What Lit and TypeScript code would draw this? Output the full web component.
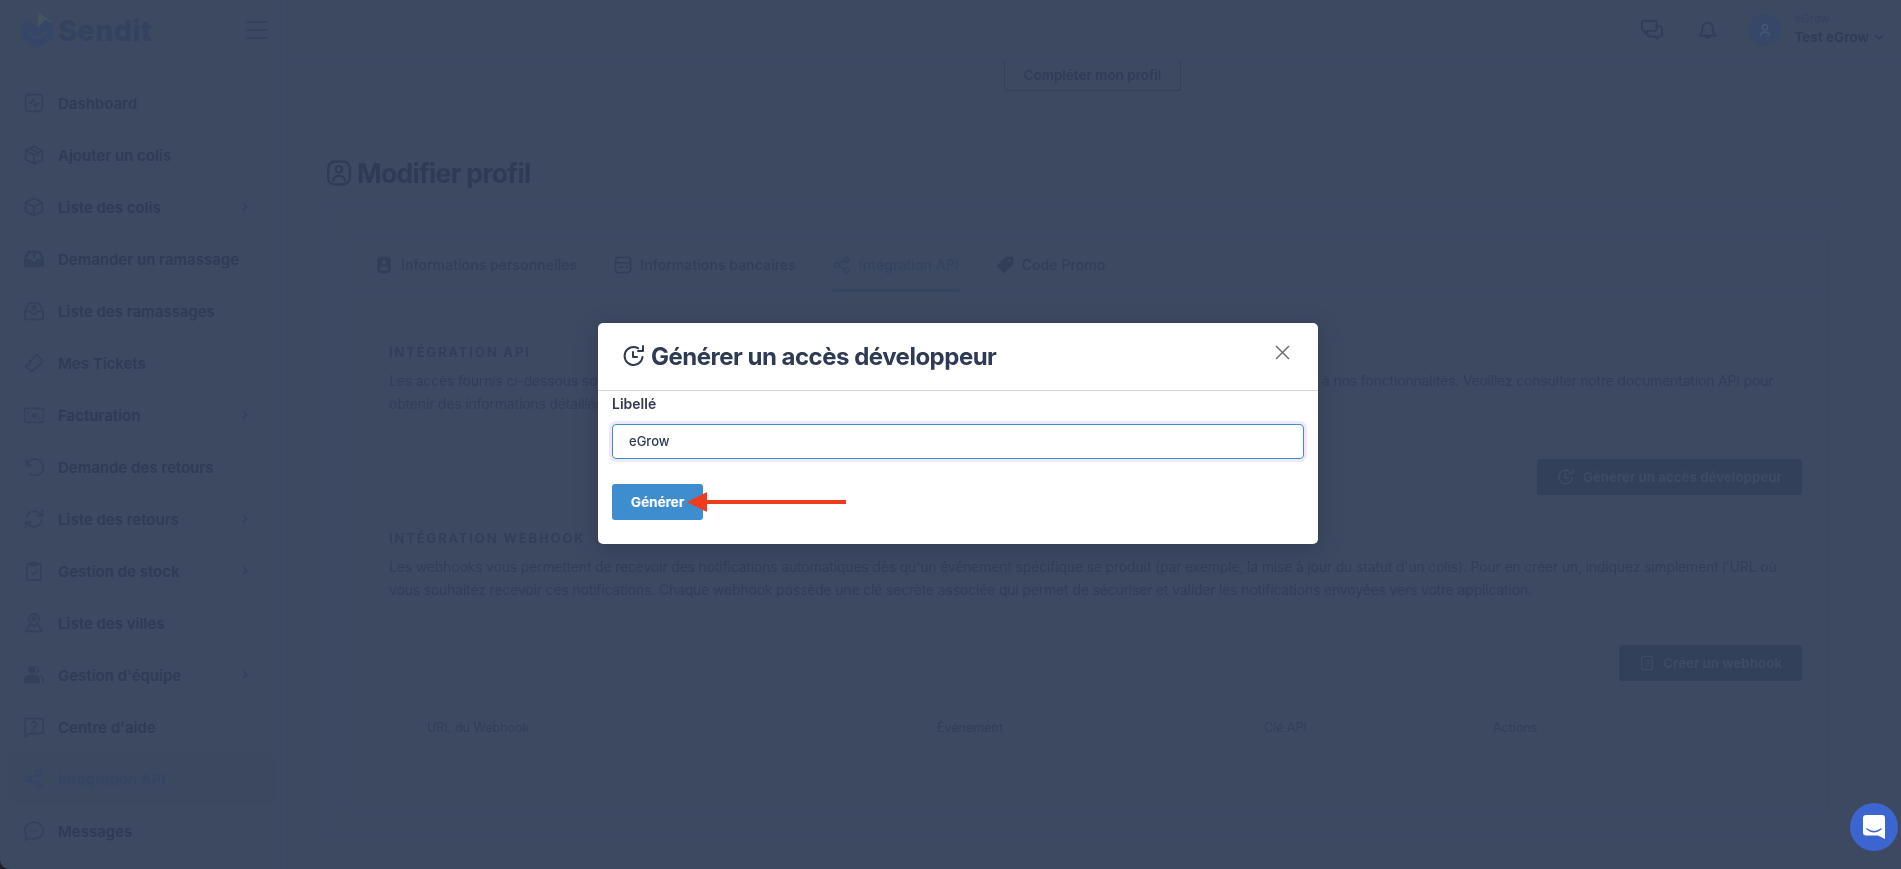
import { LitElement, html, css, svg } from "lit";
import { customElement } from "lit/decorators.js";

const s = (body: unknown, size = 20, filled = false) => html`<svg class="ic" width=${size} height=${size} viewBox="0 0 24 24" fill=${filled ? "currentColor" : "none"} stroke=${filled ? "none" : "currentColor"} stroke-width="2" stroke-linecap="round" stroke-linejoin="round">${body}</svg>`;

const icons: Record<string, unknown> = {
  activity: svg`<rect x="2" y="2" width="20" height="20" rx="4"/><path d="M5.5 12.5h3l2-5.5 3 10 2-4.5h3" stroke-width="1.5"/>`,
  boxFull: svg`<path d="M12 1.5l10 5.2v10.6l-10 5.2-10-5.2V6.7z"/><path d="M2.5 7l9.5 5 9.5-5M12 12v10M7 4.2l10 5.2v3.2"/>`,
  box: svg`<path d="M12 1.5l10 5.2v10.6l-10 5.2-10-5.2V6.7z"/><path d="M2.5 7l9.5 5 9.5-5M12 12v10"/>`,
  inboxFill: svg`<path fill="currentColor" stroke="none" d="M6 2h12a2 2 0 0 1 1.8 1.2L24 12v8a2 2 0 0 1-2 2H2a2 2 0 0 1-2-2v-8l4.2-8.8A2 2 0 0 1 6 2zm-3 10h5.5l1.5 3h4l1.5-3H21l-3.4-7H6.4zM12 5.5l3 3h-2v3h-2v-3H9z"/>`,
  inbox: svg`<path d="M6 2.5h12l5 10V20a2 2 0 0 1-2 2H3a2 2 0 0 1-2-2v-7.5z"/><path d="M1.5 12.5h6.5l2 3h4l2-3h6.5M12 11V5.5M9.5 8L12 5.5 14.5 8"/>`,
  ticket: svg`<path d="M15.5 2L22 8.500c-1.500 1-2 3 -.5 3.500L9 22.500 2 15.500l1.500-1.500c2 1 4-1 3-3z"/>`,
  money: svg`<rect x="0" y="4" width="24" height="17" rx="4"/><circle cx="12.500" cy="12.500" r="2" stroke-width="2"/><path d="M5 9h1M18 16h1"/>`,
  undo: svg`<path d="M3 4v6h6"/><path d="M3.500 10A10 10 0 1 1 7 20"/>`,
  sync: svg`<path d="M22 2v6h-6M2 22v-6h6"/><path d="M3 10a9.500 9.500 0 0 1 17-3l2 1M21 14a9.500 9.500 0 0 1-17 3l-2-1"/>`,
  clip: svg`<rect x="3.500" y="3.500" width="17" height="19.500" rx="2"/><path d="M8.500 3.500a2 2 0 0 1 2-2h3a2 2 0 0 1 2 2v2h-7zM9 14l2.500 2.500L15.500 12"/>`,
  pin: svg`<path d="M12 16S6 11.500 6 7a6 6 0 0 1 12 0c0 4.500-6 9-6 9z"/><circle cx="12" cy="7" r="2"/><path d="M7 14l-5 8h20l-5-8"/>`,
  users: svg`<g fill="currentColor" stroke="none"><circle cx="9.500" cy="5.500" r="4.500"/><path d="M0 22v-4c0-4 3-6.500 9.500-6.500S19 14 19 18v4z"/></g><path d="M15 2a4 4 0 0 1 0 7.500M20 13c2 1.500 3 3 3 5.500V22" stroke-width="1.500"/>`,
  help: svg`<path d="M3 2h18a2 2 0 0 1 2 2v14a2 2 0 0 1-2 2H7l-5.500 3.500V3.500A1.500 1.500 0 0 1 3 2z"/><path d="M9 8.500a3 3 0 1 1 4.500 2.600c-1 .6-1.500 1-1.500 2.400M12 16.500v.1" stroke-width="1.800"/>`,
  share: svg`<circle cx="5" cy="12" r="3"/><circle cx="18" cy="5" r="3"/><circle cx="18" cy="19" r="3"/><path d="M7.600 10.500l7.800-4M7.600 13.500l7.800 4"/>`,
  message: svg`<path d="M12 1.500c6.300 0 11 4.500 11 10s-4.700 10-11 10c-1.600 0-3.200-.3-4.500-.9L1.500 23l1.700-5.600A10 10 0 0 1 1 11.500c0-5.500 4.700-10 11-10z"/><path d="M8 11.500h.1M12 11.500h.1M16 11.500h.1"/>`,
  chevron: svg`<path d="M9 5.500l6.500 6.500L9 18.500" stroke-width="3.500"/>`,
  down: svg`<path d="M5 9l7 7 7-7" stroke-width="3.500"/>`,
  chat: svg`<path d="M3 2h12a2 2 0 0 1 2 2v7a2 2 0 0 1-2 2H7l-3 2.500V13H3a2 2 0 0 1-2-2V4a2 2 0 0 1 2-2z"/><path d="M17 8h4a2 2 0 0 1 2 2v7a2 2 0 0 1-2 2h-2l-1.500 2.500L15 19H9a2 2 0 0 1-2-2v-4"/>`,
  bell: svg`<path d="M6 10a6 6 0 0 1 12 0c0 6 1 7 3 9H3c2-2 3-3 3-9z"/><path d="M9.500 19a2.500 2.500 0 0 0 5 0"/>`,
  user: svg`<circle cx="12" cy="8" r="4"/><path d="M5 21c0-4 3-6 7-6s7 2 7 6"/>`,
  profile: svg`<rect x="2" y="1.500" width="20" height="21" rx="6"/><circle cx="12" cy="8.500" r="3"/><path d="M6.500 19c.5-3 2.500-4.500 5.500-4.500s5 1.500 5.500 4.500"/>`,
  badge: svg`<path fill="currentColor" stroke="none" d="M8 1h8a5 5 0 0 1 5 5v13a4 4 0 0 1-4 4H7a4 4 0 0 1-4-4V6a5 5 0 0 1 5-5zm4 4.500a3 3 0 1 0 0 6 3 3 0 0 0 0-6zM6.500 19h11c-.3-3-2.500-5-5.500-5s-5.200 2-5.500 5z"/>`,
  table: svg`<rect x="2" y="2" width="20" height="20" rx="4"/><path d="M2 9h20M7 15h5M16 15h2"/>`,
  tag: svg`<path fill="currentColor" stroke="none" d="M13 1h9a1 1 0 0 1 1 1v9L11 23 1 13zM18 4a2 2 0 1 0 0 4 2 2 0 0 0 0-4z"/>`,
  clockRefresh: svg`<path d="M20.500 13A9 9 0 1 1 16 4.200"/><path d="M21 2v5h-5M11 8v5h4"/>`,
  doc: svg`<rect x="4" y="2" width="16" height="20" rx="3"/><path d="M8 8h.5M11 8h5M8 12h.5M11 12h5M8 16h.5M11 16h5" stroke-width="1.500"/>`,
};

const nav: [string, string, boolean, boolean?][] = [
  ["Dashboard", "activity", false],
  ["Ajouter un colis", "boxFull", false],
  ["Liste des colis", "box", true],
  ["Demander un ramassage", "inboxFill", false],
  ["Liste des ramassages", "inbox", false],
  ["Mes Tickets", "ticket", false],
  ["Facturation", "money", true],
  ["Demande des retours", "undo", false],
  ["Liste des retours", "sync", true],
  ["Gestion de stock", "clip", true],
  ["Liste des villes", "pin", false],
  ["Gestion d'équipe", "users", true],
  ["Centre d'aide", "help", false],
  ["Intégration API", "share", false, true],
  ["Messages", "message", false],
];

const tabs: [string, string, boolean?][] = [
  ["Informations personnelles", "badge"],
  ["Informations bancaires", "table"],
  ["Intégration API", "share", true],
  ["Code Promo", "tag"],
];

@customElement("app-root")
export class AppRoot extends LitElement {
  static styles = css`
    :host {
      display: block;
      position: relative;
      height: 100vh;
      overflow: hidden;
      background: #1d2029;
      font-family: "Inter", "Liberation Sans", sans-serif;
    }
    .ic { display: block; flex: none; }
    .screen {
      display: flex;
      height: 100%;
      background: #3d4961;
      color: #333f59;
      border-bottom-left-radius: 9px;
      overflow: hidden;
      filter: blur(0.3px);
    }
    .side {
      width: 288px;
      flex: none;
      border-right: 1px solid #3b4760;
      box-sizing: border-box;
    }
    .brand {
      height: 60px;
      display: flex;
      align-items: center;
      padding: 0 19px 0 22px;
      color: #34425f;
    }
    .brand-name {
      font-size: 29px;
      font-weight: 800;
      line-height: 1;
      margin-left: 5px;
      letter-spacing: 0.2px;
      flex: 1;
    }
    .burger { width: 22px; display: grid; gap: 6px; }
    .burger i { display: block; height: 2px; background: #34425f; }
    .nav { padding-top: 17px; }
    .item {
      height: 52px;
      display: flex;
      align-items: center;
      font-size: 15px;
      font-weight: 600;
      color: #2f3b55;
      margin: 0 10px;
      padding: 0 26px 0 14px;
      box-sizing: border-box;
      border-radius: 6px;
    }
    .item > .ic { margin-right: 14px; color: #33405a; }
    .label { flex: 1; white-space: nowrap; }
    .chev { color: #33405a; }
    .item.active { background: #3c4860; color: #344565; }
    .item.active > .ic { color: #344565; }
    .main { flex: 1; min-width: 0; padding: 0 59px 0 34px; }
    .top {
      height: 60px;
      display: flex;
      align-items: center;
      justify-content: flex-end;
      margin: 0 -59px 0 -34px;
      padding-right: 16px;
      border-bottom: 1px solid #3b4760;
      box-sizing: border-box;
    }
    .top-ic { color: #313d57; margin-right: 34px; }
    .avatar {
      width: 32px;
      height: 32px;
      border-radius: 50%;
      background: #364767;
      color: #475674;
      display: grid;
      place-items: center;
      margin-right: 13px;
      margin-left: -3px;
    }
    .who { display: grid; gap: 2px; margin-top: -2px; }
    .who small { font-size: 11.5px; color: #34425f; line-height: 14px; }
    .who b { font-size: 13.5px; color: #303c56; font-weight: 700; display: flex; align-items: center; gap: 4px; line-height: 18px; }
    .notice {
      height: 48px;
      margin: 0 -38px 0 -11px;
      border: 1px solid #3c4860;
      border-top: 0;
      display: flex;
      justify-content: center;
      box-sizing: border-box;
    }
    .notice button {
      all: unset;
      height: 31px;
      width: 177px;
      margin-left: -6px;
      box-sizing: border-box;
      border: 1px solid #343f58;
      border-top: 0;
      border-radius: 0 0 4px 4px;
      text-align: center;
      font-size: 13.5px;
      line-height: 30px;
      font-weight: 600;
      color: #313c56;
    }
    .title {
      height: 92px;
      margin: 0 0 0 4px;
      display: flex;
      align-items: center;
      gap: 5px;
      padding-top: 38px;
      box-sizing: border-box;
      font-size: 26.5px;
      font-weight: 700;
      color: #2f3b55;
      letter-spacing: -0.7px;
    }
    .panel {
      height: 638px;
      box-sizing: border-box;
      padding: 37px 12px 25px 28px;
      border: 1px solid #3b4760;
    }
    .card { height: 100%; box-sizing: border-box; border: 1px solid #3b4760; margin: -1px 0 0 -1px; }
    .tabs { height: 54px; box-sizing: border-box; display: flex; gap: 37px; padding-left: 24px; border-bottom: 1px solid #3b4760; }
    .tab {
      display: flex;
      align-items: center;
      gap: 8px;
      font-size: 14px;
      font-weight: 500;
      letter-spacing: 0.08px;
      color: #323e58;
      margin-bottom: -1px;
      border-bottom: 3px solid transparent;
      padding-top: 2px;
      box-sizing: border-box;
    }
    .tab.on { border-color: #34465f; color: #334360; }
    .body { padding: 51px 26px 0 38px; }
    h3 { margin: 0; font-size: 13px; font-weight: 600; line-height: 18px; letter-spacing: 1.9px; color: #323e58; }
    p { margin: 8px 0 0; font-size: 14px; line-height: 23px; color: #323e58; white-space: nowrap; letter-spacing: -0.18px; }
    .row { display: flex; justify-content: flex-end; margin: 44px 0 34px; }
    .row.last { margin-bottom: 37px; }
    .dark {
      height: 36px;
      box-sizing: border-box;
      padding: 0 20px;
      background: #33405a;
      color: #3f4b64;
      border-radius: 3px;
      display: flex;
      align-items: center;
      gap: 8px;
      font-size: 13.3px;
      font-weight: 700;
    }
    .cols {
      display: grid;
      grid-template-columns: 510px 327px 229px auto;
      padding-left: 38px;
      font-size: 12.5px;
      line-height: 20px;
      color: #323e58;
    }
    .backdrop { position: absolute; inset: 0; padding: 323px 0 0 598px; box-sizing: border-box; }
    .modal {
      width: 720px;
      height: 221px;
      background: #fff;
      border-radius: 5px;
      box-shadow: 0 6px 22px rgba(36, 46, 70, 0.45);
      color: #2f3a52;
    }
    .m-head {
      height: 68px;
      box-sizing: border-box;
      border-bottom: 1px solid #d5d5e4;
      display: flex;
      align-items: center;
      padding: 0 28px 0 24px;
      gap: 5px;
    }
    .m-head .ic { margin-top: -2px; }
    .m-head h2 { margin: 0; flex: 1; font-size: 24px; font-weight: 700; letter-spacing: -0.5px; color: #2f3b55; }
    .x { color: #6f6f6f; margin-top: -8px; }
    .m-body { padding: 4px 14px 0; }
    label { display: block; font-size: 14px; font-weight: 600; line-height: 18px; color: #2f3a52; }
    .input {
      margin-top: 11px;
      height: 35px;
      box-sizing: border-box;
      border: 1px solid #3e8ccc;
      border-radius: 4px;
      box-shadow: 0 0 0 3px #efeafb;
      padding: 0 16px;
      font-size: 13px;
      font-weight: 500;
      line-height: 33px;
      color: #2f3a52;
    }
    .gen { position: relative; margin-top: 25px; width: 91px; }
    .gen button {
      all: unset;
      display: block;
      width: 91px;
      height: 36px;
      border-radius: 3px;
      background: #3e8ecf;
      color: #fff;
      text-align: center;
      font-size: 13.5px;
      font-weight: 700;
    }
    .arrow { position: absolute; left: 75px; top: 8px; }
    .fab {
      position: absolute;
      left: 1850px;
      top: 803px;
      width: 48px;
      height: 48px;
      border-radius: 50%;
      background: #3c66cf;
      display: grid;
      place-items: center;
    }
  `;

  render() {
    return html`
      <div class="screen">
        <aside class="side">
          <div class="brand">
            <svg width="31" height="36" viewBox="0 0 31 36">
              <path d="M16 0l14 10-14 8z" fill="#42545f"/>
              <path d="M0 12l8-4 7.500 8L23 8l8 4v15l-15.500 9L0 27z" fill="#364668"/>
              <path d="M7 17a8.500 8.500 0 0 0 17 0" fill="none" stroke="#3d4961" stroke-width="3"/>
            </svg>
            <span class="brand-name">Sendit</span>
            <div class="burger"><i></i><i></i><i></i></div>
          </div>
          <nav class="nav">
            ${nav.map(([t, i, c, a]) => html`
              <div class="item ${a ? "active" : ""}">
                ${s(icons[i])}
                <span class="label">${t}</span>
                ${c ? html`<span class="chev">${s(icons.chevron, 12)}</span>` : ""}
              </div>`)}
          </nav>
        </aside>
        <main class="main">
          <div class="top">
            <span class="top-ic">${s(icons.chat, 22)}</span>
            <span class="top-ic">${s(icons.bell, 21)}</span>
            <div class="avatar">${s(icons.user, 16)}</div>
            <div class="who"><small>eGrow</small><b>Test eGrow ${s(icons.down, 12)}</b></div>
          </div>
          <div class="notice"><button>Compléter mon profil</button></div>
          <div class="title">${s(icons.profile, 26)}Modifier profil</div>
          <section class="panel">
            <div class="card">
              <div class="tabs">
                ${tabs.map(([t, i, on]) => html`<div class="tab ${on ? "on" : ""}">${s(icons[i], 18)}${t}</div>`)}
              </div>
              <div class="body">
                <h3>INTÉGRATION API</h3>
                <p>Les accès fournis ci-dessous sont personnels et confidentiels, ils permettent de se connecter de manière sécurisée à la plateforme et d'accéder à nos fonctionnalités. Veuillez consulter notre documentation API pour<br />obtenir des informations détaillées sur son utilisation.</p>
                <div class="row"><div class="dark">${s(icons.clockRefresh, 18)}Générer un accès développeur</div></div>
                <h3>INTÉGRATION WEBHOOK</h3>
                <p>Les webhooks vous permettent de recevoir des notifications automatiques dès qu'un événement spécifique se produit (par exemple, la mise à jour du statut d'un colis). Pour en créer un, indiquez simplement l'URL où<br />vous souhaitez recevoir ces notifications. Chaque webhook possède une clé secrète associée qui permet de sécuriser et valider les notifications envoyées vers votre application.</p>
                <div class="row last"><div class="dark">${s(icons.doc, 16)}Créer un webhook</div></div>
                <div class="cols"><span>URL du Webhook</span><span>Événement</span><span>Clé API</span><span>Actions</span></div>
              </div>
            </div>
          </section>
        </main>
      </div>

      <div class="backdrop">
        <div class="modal">
          <div class="m-head">
            ${s(icons.clockRefresh, 24)}
            <h2>Générer un accès développeur</h2>
            <svg class="x" width="15" height="15" viewBox="0 0 15 15" fill="none" stroke="currentColor" stroke-width="1.500"><path d="M1 1l13 13M14 1L1 14"/></svg>
          </div>
          <div class="m-body">
            <label>Libellé</label>
            <div class="input">eGrow</div>
            <div class="gen">
              <button>Générer</button>
              <svg class="arrow" width="160" height="20" viewBox="0 0 160 20">
                <path d="M0 10L20 0v8h139v4H20v8z" fill="#f03c1d"/>
              </svg>
            </div>
          </div>
        </div>
      </div>

      <div class="fab">
        <svg width="22" height="24" viewBox="0 0 22 24">
          <path d="M3 0h16a3 3 0 0 1 3 3v21l-7-3.500H3a3 3 0 0 1-3-3V3a3 3 0 0 1 3-3z" fill="#fff"/>
          <path d="M4 14c4 3.500 10 3.500 14 0" fill="none" stroke="#3c66cf" stroke-width="1.500" stroke-linecap="round"/>
        </svg>
      </div>
    `;
  }
}
